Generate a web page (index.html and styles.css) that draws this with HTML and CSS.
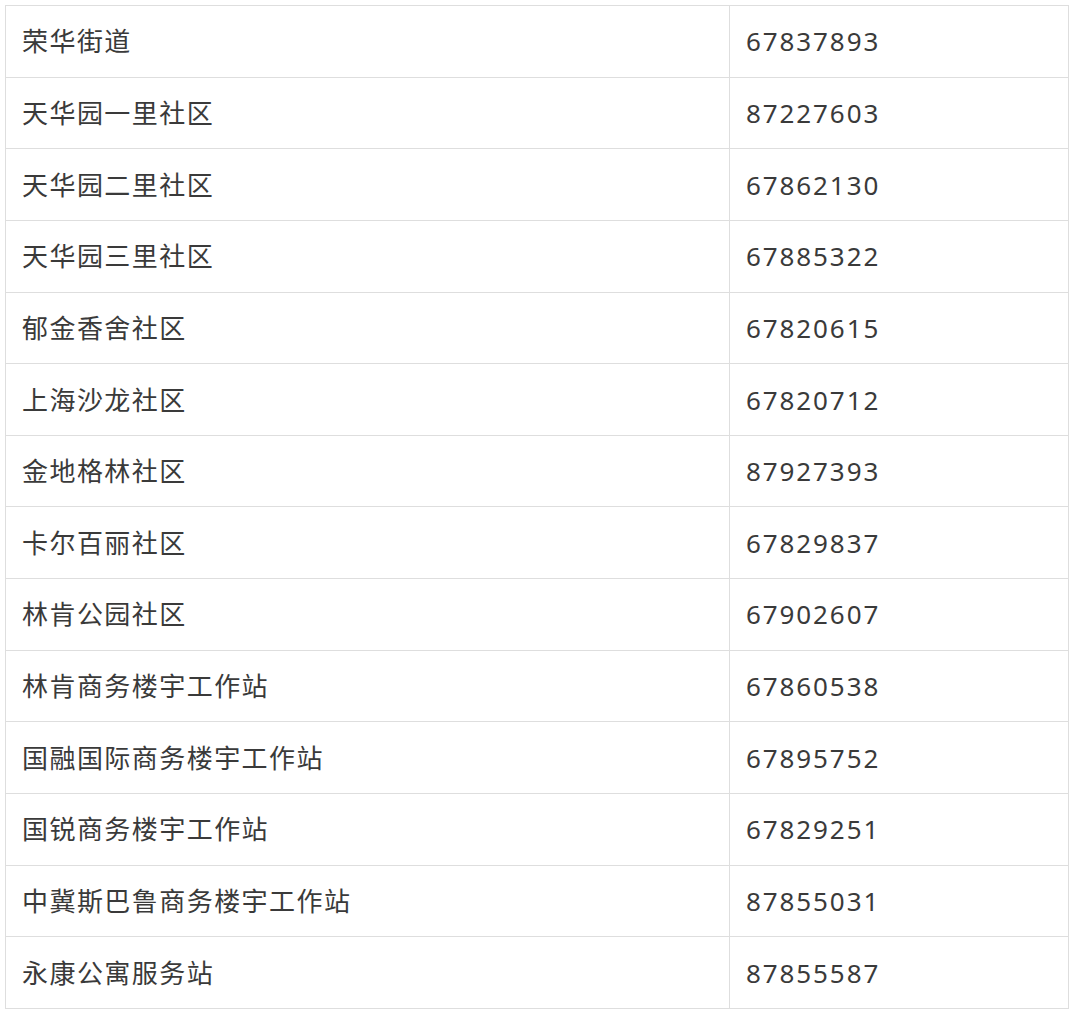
FILE: index.html
```html
<!DOCTYPE html>
<html lang="zh-CN">
<head>
<meta charset="utf-8">
<title>联系电话</title>
<link rel="stylesheet" href="styles.css">
</head>
<body>
<table class="phone-table">
  <tbody>
    <tr><td class="name">荣华街道</td><td class="tel">67837893</td></tr>
    <tr><td class="name">天华园一里社区</td><td class="tel">87227603</td></tr>
    <tr><td class="name">天华园二里社区</td><td class="tel">67862130</td></tr>
    <tr><td class="name">天华园三里社区</td><td class="tel">67885322</td></tr>
    <tr><td class="name">郁金香舍社区</td><td class="tel">67820615</td></tr>
    <tr><td class="name">上海沙龙社区</td><td class="tel">67820712</td></tr>
    <tr><td class="name">金地格林社区</td><td class="tel">87927393</td></tr>
    <tr><td class="name">卡尔百丽社区</td><td class="tel">67829837</td></tr>
    <tr><td class="name">林肯公园社区</td><td class="tel">67902607</td></tr>
    <tr><td class="name">林肯商务楼宇工作站</td><td class="tel">67860538</td></tr>
    <tr><td class="name">国融国际商务楼宇工作站</td><td class="tel">67895752</td></tr>
    <tr><td class="name">国锐商务楼宇工作站</td><td class="tel">67829251</td></tr>
    <tr><td class="name">中冀斯巴鲁商务楼宇工作站</td><td class="tel">87855031</td></tr>
    <tr><td class="name">永康公寓服务站</td><td class="tel">87855587</td></tr>
  </tbody>
</table>
</body>
</html>
```

FILE: styles.css
```css
html, body {
  margin: 0;
  padding: 0;
  background: #ffffff;
}

body {
  padding: 5px 0 0 5px;
  font-family: "Noto Sans", "Noto Sans CJK SC", sans-serif;
  color: #3a3a3a;
}

.phone-table {
  border-collapse: collapse;
  width: 1064px;
  table-layout: fixed;
}

.phone-table tr {
  height: 71.65px;
}

.phone-table td {
  border: 1px solid #dedede;
  padding: 0 0 0 16px;
  font-size: 26px;
  letter-spacing: 1.45px;
  line-height: 1;
  vertical-align: middle;
  white-space: nowrap;
}

.phone-table .name {
  width: 707px;
}

.phone-table .tel {
  width: 322px;
  letter-spacing: 1.9px;
}
```
